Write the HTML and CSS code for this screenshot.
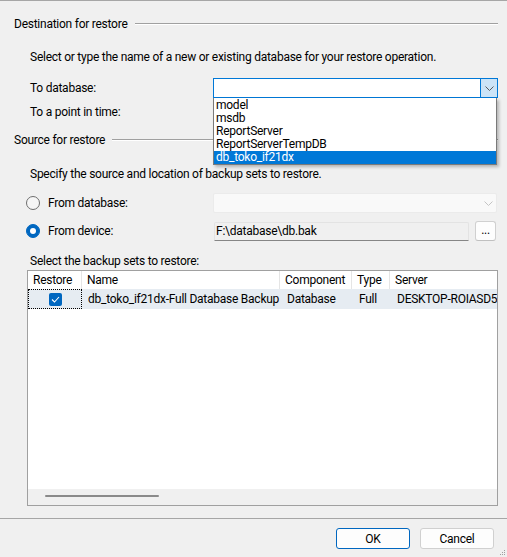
FILE: index.html
```html
<!DOCTYPE html>
<html>
<head>
<meta charset="utf-8">
<link rel="stylesheet" href="styles.css">
</head>
<body>
<div class="dialog">
  <div class="content">
    <div class="group-head"><span>Destination for restore</span><div class="rule"></div></div>
    <div class="indent">
      <div class="line r1">Select or type the name of a new or existing database for your restore operation.</div>
      <div class="field r2">
        <span class="label">To database:</span>
        <div class="combo active">
          <div class="combo-text"></div>
          <div class="combo-btn"><svg width="9" height="5" viewBox="0 0 9 5"><path d="M0.5 0.5 L4.5 4.5 L8.5 0.5" fill="none" stroke="#5a5a5a" stroke-width="1"/></svg></div>
          <ul class="droplist">
            <li>model</li>
            <li>msdb</li>
            <li>ReportServer</li>
            <li>ReportServerTempDB</li>
            <li class="sel">db_toko_if21dx</li>
          </ul>
        </div>
      </div>
      <div class="line r3">To a point in time:</div>
    </div>
    <div class="group-head g2"><span>Source for restore</span><div class="rule"></div></div>
    <div class="indent">
      <div class="line r4">Specify the source and location of backup sets to restore.</div>
      <div class="field r5">
        <span class="radio-label"><span class="radio"></span>From database:</span>
        <div class="combo disabled">
          <div class="combo-text"></div>
          <div class="combo-btn"><svg width="9" height="5" viewBox="0 0 9 5"><path d="M0.5 0.5 L4.5 4.5 L8.5 0.5" fill="none" stroke="#c4c4c4" stroke-width="1"/></svg></div>
        </div>
      </div>
      <div class="field r6">
        <span class="radio-label"><span class="radio on"></span>From device:</span>
        <div class="path">F:\database\db.bak</div>
        <div class="browse">...</div>
      </div>
      <div class="line r7">Select the backup sets to restore:</div>
      <div class="grid">
        <div class="grid-head">
          <div class="c c1">Restore</div>
          <div class="c c2">Name</div>
          <div class="c c3">Component</div>
          <div class="c c4">Type</div>
          <div class="c c5">Server</div>
        </div>
        <div class="grid-row">
          <div class="c c1 focus"><span class="check"><svg width="9" height="7" viewBox="0 0 9 7"><path d="M1 3.5 L3.5 6 L8 1" fill="none" stroke="#fff" stroke-width="1.1"/></svg></span></div>
          <div class="c c2">db_toko_if21dx-Full Database Backup</div>
          <div class="c c3">Database</div>
          <div class="c c4">Full</div>
          <div class="c c5">DESKTOP-ROIASD5</div>
        </div>
        <div class="grid-empty"></div>
        <div class="hscroll"><div class="thumb"></div></div>
      </div>
    </div>
  </div>
  <div class="footer">
    <button class="btn default">OK</button>
    <button class="btn">Cancel</button>
  </div>
  <svg class="grip" width="6" height="6" viewBox="0 0 6 6"><rect x="4" y="0" width="1" height="1" fill="#a0a0a0"/><rect x="2" y="2" width="1" height="1" fill="#a0a0a0"/><rect x="4" y="2" width="1" height="1" fill="#a0a0a0"/><rect x="0" y="4" width="1" height="1" fill="#a0a0a0"/><rect x="2" y="4" width="1" height="1" fill="#a0a0a0"/><rect x="4" y="4" width="1" height="1" fill="#a0a0a0"/></svg>
</div>
</body>
</html>
```

FILE: styles.css
```css
html, body {
  margin: 0;
  padding: 0;
}
body {
  background: #f0f0f0;
  font-family: Roboto, "Liberation Sans", sans-serif;
  font-size: 12px;
  letter-spacing: -0.25px;
  color: #000;
}
.dialog {
  position: relative;
  width: 507px;
  height: 557px;
  box-sizing: border-box;
  border-top: 1px solid #a6a6a6;
  overflow: hidden;
}
.content {
  padding: 0 9px 0 14px;
}
.group-head {
  display: flex;
  align-items: center;
  height: 18px;
  margin-top: 14px;
}
.group-head.g2 {
  margin-top: 10px;
}
.rule {
  flex: 1;
  height: 0;
  margin-left: 7px;
  border-top: 1px solid #a0a0a0;
  border-bottom: 1px solid #ffffff;
}
.indent {
  padding-left: 16px;
}
.line {
  height: 18px;
  line-height: 18px;
  white-space: nowrap;
}
.r1 { margin-top: 15px; }
.r3 { margin-top: 5px; }
.r4 { margin-top: 16px; }
.r7 { margin-top: 11px; }
.field {
  display: flex;
  align-items: center;
  height: 20px;
}
.r2 { margin-top: 12px; }
.r5 { margin-top: 10px; }
.r6 { margin-top: 8px; }
.label, .radio-label {
  width: 183px;
  flex: none;
  display: flex;
  align-items: center;
}
.radio-label {
  margin-left: -4px;
  width: 187px;
}
.radio {
  width: 12px;
  height: 12px;
  border: 1px solid #6e6e6e;
  border-radius: 50%;
  background: #f6f6f6;
  margin-right: 8px;
  position: relative;
  flex: none;
}
.radio.on {
  background: #0067c0;
  border-color: #0067c0;
}
.radio.on::after {
  content: "";
  position: absolute;
  left: 3px;
  top: 3px;
  width: 6px;
  height: 6px;
  border-radius: 50%;
  background: #fff;
}
.combo {
  position: relative;
  width: 285px;
  height: 20px;
  box-sizing: border-box;
  display: flex;
}
.combo.active {
  border: 1px solid #0078d7;
  background: #fff;
}
.combo.disabled {
  width: 284px;
  border: 1px solid #ebebeb;
  background: #f9f9f9;
  border-radius: 2px;
}
.combo-text {
  flex: 1;
}
.combo-btn {
  width: 16px;
  display: flex;
  align-items: center;
  justify-content: center;
}
.combo.active .combo-btn {
  background: #cce4f7;
  border-left: 1px solid #0078d7;
}
.droplist {
  position: absolute;
  left: -1px;
  top: 19px;
  width: 284px;
  box-sizing: border-box;
  margin: 0;
  padding: 1px 0 0 0;
  list-style: none;
  background: #fff;
  border: 1px solid #7a7a7a;
  border-top: none;
  box-shadow: 2px 2px 3px rgba(0, 0, 0, 0.25);
  z-index: 5;
}
.droplist li {
  height: 13px;
  line-height: 13px;
  padding-left: 2px;
  white-space: nowrap;
}
.droplist li.sel {
  background: #0078d7;
  color: #fff;
}
.path {
  width: 255px;
  height: 19px;
  box-sizing: border-box;
  border: 1px solid #e3e3e3;
  border-bottom: 1px solid #868686;
  background: #f0f0f0;
  line-height: 17px;
  padding-left: 1px;
  margin-left: 1px;
  border-radius: 2px 2px 0 0;
}
.browse {
  width: 21px;
  height: 20px;
  box-sizing: border-box;
  margin-left: 6px;
  border: 1px solid #d0d0d0;
  border-bottom-color: #c0c0c0;
  border-radius: 3px;
  background: #fdfdfd;
  text-align: center;
  line-height: 17px;
  font-size: 12px;
}
.grid {
  margin-left: -3px;
  width: 471px;
  height: 236px;
  box-sizing: border-box;
  border: 1px solid #a0a0a0;
  background: #fff;
  display: flex;
  flex-direction: column;
  overflow: hidden;
}
.grid-head, .grid-row {
  display: flex;
  flex: none;
  white-space: nowrap;
}
.grid-head {
  height: 18px;
  line-height: 18px;
}
.grid-row {
  height: 20px;
  line-height: 20px;
  background: #e6ecf2;
}
.c {
  flex: none;
  box-sizing: border-box;
  overflow: hidden;
  padding-left: 5px;
}
.grid-head .c {
  border-right: 1px solid #e5e5e5;
}
.grid-row .c {
  padding-left: 7px;
}
.grid-row .c2 { padding-left: 6px; }
.c1 { width: 54px; }
.c2 { width: 198px; }
.c3 { width: 72px; }
.c4 { width: 38px; }
.c5 { width: 120px; }
.grid-head .c5 { border-right: none; }
.grid-row .c1.focus {
  width: 54px;
  border: 1px dotted #000;
  display: flex;
  align-items: center;
  justify-content: center;
  padding-left: 1px;
}
.check {
  width: 13px;
  height: 13px;
  border-radius: 2px;
  background: #0067c0;
  display: flex;
  align-items: center;
  justify-content: center;
}
.grid-empty {
  flex: 1;
}
.hscroll {
  height: 16px;
  flex: none;
  background: #f0f0f0;
  position: relative;
}
.thumb {
  position: absolute;
  left: 17px;
  top: 6px;
  width: 114px;
  height: 2px;
  border-radius: 1px;
  background: #8a8a8a;
}
.footer {
  margin-top: 12px;
  border-top: 1px solid #a6a6a6;
  padding: 9px 13px 0 0;
  display: flex;
  justify-content: flex-end;
  gap: 10px;
}
.btn {
  width: 74px;
  height: 21px;
  box-sizing: border-box;
  border: 1px solid #d0d0d0;
  border-radius: 3px;
  background: #fdfdfd;
  font-family: Roboto, "Liberation Sans", sans-serif;
  font-size: 12px;
  letter-spacing: -0.25px;
  color: #000;
  padding: 0;
  margin: 0;
}
.btn.default {
  border-color: #0067c0;
}
.grip {
  position: absolute;
  right: 1px;
  bottom: 1px;
}
```
